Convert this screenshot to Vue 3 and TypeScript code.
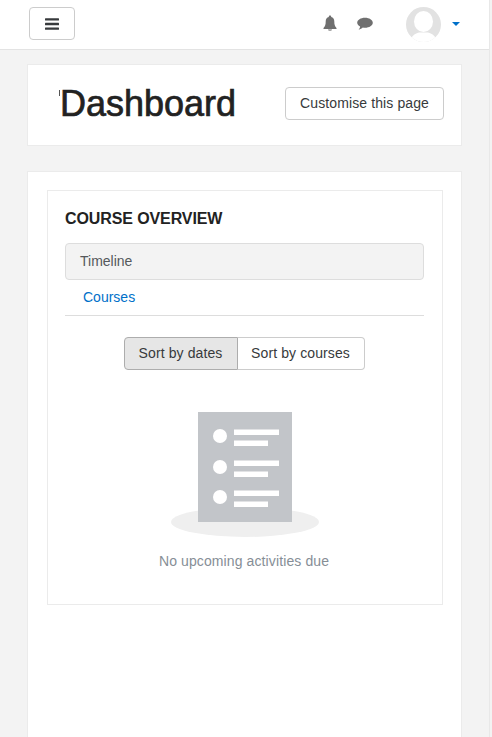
<script setup lang="ts">
// rows of the empty-state illustration
const rows: number[] = [436, 467, 497];
</script>

<template>
	<div class="page">
		<header class="navbar">
			<button class="menu-btn" aria-label="Menu">
				<svg width="14" height="12" viewBox="0 0 14 12">
					<rect width="14" height="2.4" y="0.2" rx="0.5" fill="#373a3c" />
					<rect width="14" height="2.4" y="4.8" rx="0.5" fill="#373a3c" />
					<rect width="14" height="2.4" y="9.4" rx="0.5" fill="#373a3c" />
				</svg>
			</button>
			<div class="nav-right">
				<svg class="bell" width="16" height="16" viewBox="0 0 16 16">
					<path d="M8 0.4c.7 0 1.2.5 1.2 1.2v.5c2 .5 3.1 2.2 3.1 4.3 0 3.2.6 4.9 2.2 6.5v1H1.5v-1c1.6-1.6 2.2-3.3 2.2-6.5 0-2.1 1.1-3.8 3.1-4.3v-.5C6.8.9 7.3.4 8 .4z" fill="#6f6f6f" />
					<path d="M6 14.6h4c0 .8-.9 1.2-2 1.2s-2-.4-2-1.2z" fill="#6f6f6f" />
				</svg>
				<svg class="comment" width="16" height="14" viewBox="0 0 16 14">
					<path d="M8 .8c4.300 0 7.800 2.200 7.800 5s-3.500 5-7.800 5c-.8 0-1.500-.1-2.200-.2-1 1-2.400 1.900-4.200 2.200.8-.9 1.400-2 1.500-3.300C1.300 8.500.2 7.200.2 5.800c0-2.800 3.500-5 7.800-5z" fill="#6f6f6f" />
				</svg>
				<svg class="avatar" width="35" height="35" viewBox="0 0 35 35">
					<defs>
						<clipPath id="avatar-clip"><circle cx="17.500" cy="17.500" r="17.500" /></clipPath>
					</defs>
					<g clip-path="url(#avatar-clip)">
						<rect width="35" height="35" fill="#e2e2e2" />
						<ellipse cx="17.500" cy="14.500" rx="9.500" ry="10.500" fill="#fff" />
						<path d="M3 37c1-7 5-10 10-11.500h9c5 1.500 9 4.500 10 11.500z" fill="#fff" />
					</g>
				</svg>
				<span class="caret"></span>
			</div>
		</header>

		<main class="main">
			<section class="card page-header">
				<h1 class="page-title">Dashboard</h1>
				<button class="btn">Customise this page</button>
			</section>

			<section class="card content">
				<div class="block">
					<h3 class="block-title">COURSE OVERVIEW</h3>
					<ul class="tabs">
						<li class="tab active">Timeline</li>
						<li class="tab"><a href="#" class="tab-link">Courses</a></li>
					</ul>
					<div class="sort-group">
						<button class="sort-btn selected">Sort by dates</button>
						<button class="sort-btn">Sort by courses</button>
					</div>
					<div class="empty">
						<svg width="150" height="126" viewBox="171 412 150 126">
							<ellipse cx="245" cy="522" rx="74" ry="15" fill="#efefef" />
							<rect x="198" y="412" width="94" height="110" fill="#c2c5c9" />
							<g v-for="y in rows" :key="y" fill="#fff">
								<circle cx="220" :cy="y" r="7" />
								<rect x="234" :y="y - 6.500" width="45" height="5.500" />
								<rect x="234" :y="y + 4.500" width="34" height="5.500" />
							</g>
						</svg>
						<p class="empty-text">No upcoming activities due</p>
					</div>
				</div>
			</section>
		</main>
	</div>
</template>

<style scoped>
	.page {
		width: 490px;
		box-sizing: border-box;
		border-right: 1px solid #e8e8e8;
		height: 737px;
		overflow: hidden;
		font-family: "Liberation Sans", Arial, sans-serif;
		font-size: 14px;
		color: #373a3c;
	}

	.navbar {
		display: flex;
		justify-content: space-between;
		align-items: center;
		height: 50px;
		box-sizing: border-box;
		padding: 0 29px 2px 29px;
		background: #fff;
		border-bottom: 1px solid #e3e3e3;
	}

	.menu-btn {
		display: flex;
		align-items: center;
		justify-content: center;
		width: 46px;
		height: 33px;
		padding: 0;
		background: #fff;
		border: 1px solid #ccc;
		border-radius: 4px;
	}

	.nav-right {
		display: flex;
		align-items: center;
	}

	.bell {
		margin-right: 19px;
		margin-top: -2px;
	}

	.comment {
		margin-right: 33px;
		margin-top: 1px;
	}

	.avatar {
		margin-top: 1px;
		margin-right: 11px;
	}

	.caret {
		width: 0;
		height: 0;
		border-left: 4px solid transparent;
		border-right: 4px solid transparent;
		border-top: 4px solid #0070c9;
	}

	.main {
		padding: 14px 0 0 27px;
		width: 435px;
	}

	.card {
		background: #fff;
		border: 1px solid #ebebeb;
		box-sizing: border-box;
	}

	.page-header {
		display: flex;
		justify-content: space-between;
		align-items: center;
		height: 82px;
		padding: 0 17px 3px 32px;
		margin-bottom: 25px;
	}

	.page-title {
		position: relative;
		margin: 0;
		font-size: 36px;
		font-weight: 400;
		line-height: 1.1;
		color: #222;
		-webkit-text-stroke: 0.7px #222;
	}

	/* stray tick left of the heading */
	.page-title::before {
		content: "";
		position: absolute;
		left: -1px;
		top: 6px;
		width: 1px;
		height: 6px;
		background: #555;
	}

	.btn {
		height: 33px;
		width: 159px;
		padding: 0 0 2px;
		background: #fff;
		border: 1px solid #ccc;
		border-radius: 4px;
		font: inherit;
		letter-spacing: 0.11px;
		color: #373a3c;
	}

	.content {
		height: 600px;
		padding: 18px 18px 0 19px;
	}

	.block {
		box-sizing: border-box;
		width: 396px;
		height: 415px;
		border: 1px solid #ebebeb;
		padding: 18px 18px 0 17px;
	}

	.block-title {
		margin: 0 0 14px;
		font-size: 16px;
		line-height: 20px;
		font-weight: 700;
		color: #222;
		letter-spacing: -0.1px;
	}

	.tabs {
		list-style: none;
		margin: 0;
		padding: 0;
		border-bottom: 1px solid #ddd;
	}

	.tab {
		height: 35px;
		line-height: 35px;
		box-sizing: border-box;
	}

	.tab.active {
		height: 37px;
		padding-left: 14px;
		background: #f3f3f3;
		border: 1px solid #ddd;
		border-radius: 4px;
		color: #55595c;
	}

	.tab-link {
		display: block;
		padding-left: 18px;
		color: #0070c9;
		text-decoration: none;
	}

	.sort-group {
		display: flex;
		justify-content: center;
		margin-top: 21px;
		margin-left: -1px;
	}

	.sort-btn {
		height: 33px;
		padding: 0 0 2px;
		width: 127px;
		background: #fff;
		border: 1px solid #ccc;
		border-left: none;
		border-radius: 0 4px 4px 0;
		font: inherit;
		letter-spacing: 0.11px;
		color: #373a3c;
	}

	.sort-btn.selected {
		width: 114px;
		background: #e6e6e6;
		border: 1px solid #adadad;
		border-radius: 4px 0 0 4px;
	}

	.empty {
		display: flex;
		flex-direction: column;
		align-items: center;
		margin-top: 42px;
		margin-left: 3px;
	}

	.empty svg {
		display: block;
	}

	.empty-text {
		margin: 15px 0 0 -4px;
		line-height: 16px;
		letter-spacing: 0.11px;
		color: #868e96;
	}
</style>

<style>
	html,
	body {
		background: #f3f3f3;
	}
</style>
